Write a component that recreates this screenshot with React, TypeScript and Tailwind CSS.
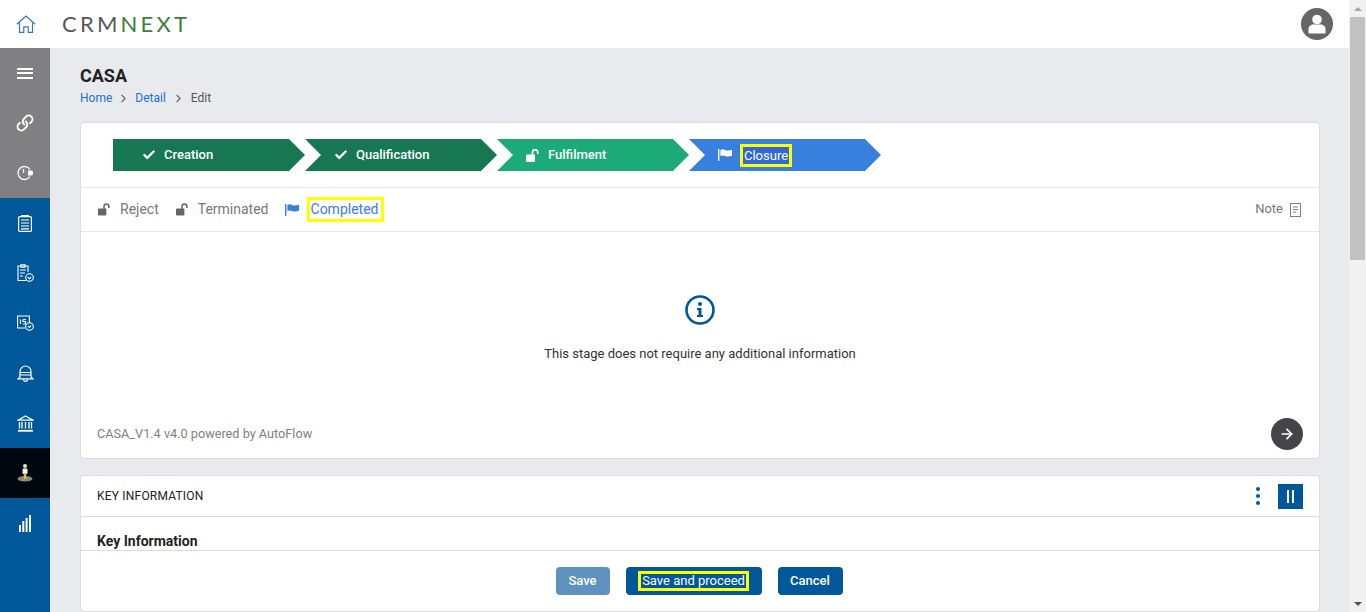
import { ArrowRight, Check, ChevronRight, Link } from "lucide-react"

const NAVY = "bg-[#00589b]"

type StageProps = {
  label: string
  color: string
  first?: boolean
  icon: React.ReactNode
  marked?: boolean
}

const LockOpen = ({ className }: { className?: string }) => (
  <svg viewBox="0 0 14 13" className={className} fill="currentColor">
    <rect x="0" y="5.5" width="9" height="7.5" rx="0.8" />
    <path d="M6.5 6V3.2A2.6 2.6 0 0 1 11.7 3.2V5" fill="none" stroke="currentColor" strokeWidth="1.7" />
  </svg>
)

const Flag = ({ className }: { className?: string }) => (
  <svg viewBox="0 0 14 12" className={className} fill="currentColor">
    <rect x="0" y="0" width="1.4" height="12" />
    <path d="M2.4 1C4.2 0 5.4 0.2 7 1C9 1.8 11 1.6 14 0.8V6.8C11 7.8 9 7.8 7 7C5.2 6.2 4 6.2 2.4 7Z" />
  </svg>
)

const Stage = ({ label, color, first, icon, marked }: StageProps) => (
  <div
    className={`flex h-8 w-48 items-center text-[13px] font-medium text-white ${color} ${
      first
        ? "pl-[29px] [clip-path:polygon(0_0,176px_0,192px_50%,176px_100%,0_100%)]"
        : "pl-[29px] [clip-path:polygon(0_0,176px_0,192px_50%,176px_100%,0_100%,16px_50%)]"
    }`}
  >
    <span className="flex w-[22px] shrink-0 items-center">{icon}</span>
    <span className={marked ? "border-[3px] border-[#ffff00] bg-[#3367d6] px-[1px] font-normal leading-[17px]" : ""}>
      {label}
    </span>
  </div>
)

const SideItem = ({ children, active }: { children: React.ReactNode; active?: boolean }) => (
  <div className={`flex h-[50px] items-center justify-center ${active ? "bg-[#00080f]" : ""}`}>{children}</div>
)

const Sidebar = () => (
  <aside className="flex w-[50px] shrink-0 flex-col text-white">
    <div className="bg-[#808083]">
      <SideItem>
        <span className="flex w-4 flex-col gap-[2.5px]">
          <span className="h-[2px] bg-white" />
          <span className="h-[2px] bg-white" />
          <span className="h-[2px] bg-white" />
        </span>
      </SideItem>
      <SideItem>
        <Link size={18} strokeWidth={2.6} className="-scale-x-100 rotate-90" />
      </SideItem>
      <SideItem>
        <svg viewBox="0 0 18 16" className="h-4 w-[18px]" fill="none" stroke="currentColor" strokeWidth="1.3">
          <path d="M14 4.5A6.5 6.5 0 1 0 14 11.500" />
          <path d="M7.500 4v4" />
          <path d="M12 5.500h3.500l1.500 1v3l-1.500 1H12z" fill="currentColor" stroke="none" />
        </svg>
      </SideItem>
    </div>
    <div className={`flex-1 ${NAVY}`}>
      <SideItem>
        <svg viewBox="0 0 14 17" className="h-[17px] w-[14px]" fill="none" stroke="currentColor" strokeWidth="1.2">
          <rect x="0.6" y="1.600" width="12.800" height="14.800" rx="1" />
          <path d="M3 0.600h8M3 5h8M3 8h8M3 11h8M3 13.800h8" />
        </svg>
      </SideItem>
      <SideItem>
        <svg viewBox="0 0 17 18" className="h-[18px] w-[17px]" fill="none" stroke="currentColor" strokeWidth="1.1">
          <path d="M9 16.500H1V2h10v6" />
          <path d="M4 0.800h4v2.400H4zM3 6h6M3 9h5M3 12h3" />
          <circle cx="12.500" cy="13.500" r="3.800" />
          <path d="M10.800 13l1.700 1.800 1.700-1.800" />
        </svg>
      </SideItem>
      <SideItem>
        <svg viewBox="0 0 17 16" className="h-4 w-[17px]" fill="none" stroke="currentColor" strokeWidth="1.1">
          <path d="M8 13H0.600V1h11.800v7" />
          <path d="M3.500 4.500V9M6 4.500h3M6 4.500v2h2.500V9H6" />
          <circle cx="12.500" cy="11.500" r="3.800" />
          <path d="M11 11l1.500 1.500 1.500-2" />
        </svg>
      </SideItem>
      <SideItem>
        <svg viewBox="0 0 17 17" className="h-[17px] w-[17px]" fill="none" stroke="currentColor" strokeWidth="1.200">
          <path d="M3 12V6.500a5.500 5.500 0 0 1 11 0V12l2 1.800H1z" />
          <path d="M3 7.500h11M3 10h11" />
          <path d="M6.500 14.500a2 1.800 0 0 0 4 0" />
        </svg>
      </SideItem>
      <SideItem>
        <svg viewBox="0 0 17 17" className="h-[17px] w-[17px]" fill="none" stroke="currentColor" strokeWidth="1.300">
          <path d="M8.500 1L16 5.200H1z" />
          <path d="M2.500 7v6.500M5 7v6.500M8.500 7v6.500M12 7v6.500M14.500 7v6.500" />
          <path d="M1 15.800h15" strokeWidth="1.800" />
        </svg>
      </SideItem>
      <SideItem active>
        <svg viewBox="0 0 16 18" className="h-[18px] w-4">
          <ellipse cx="8" cy="14.800" rx="7.500" ry="2.800" fill="#8a8a85" />
          <circle cx="8" cy="2" r="2" fill="#f2e2b8" />
          <rect x="5.500" y="4.500" width="5" height="5.500" rx="1.200" fill="#ffffff" />
          <rect x="6.800" y="9" width="2.400" height="6" fill="#f5b731" />
        </svg>
      </SideItem>
      <SideItem>
        <svg viewBox="0 0 12 17" className="h-[17px] w-3" fill="currentColor">
          <rect x="0" y="10" width="2" height="7" />
          <rect x="3.300" y="6" width="2" height="11" />
          <rect x="6.600" y="3" width="2" height="14" />
          <rect x="10" y="0" width="2" height="17" />
        </svg>
      </SideItem>
    </div>
  </aside>
)

const Header = () => (
  <header className="flex h-12 shrink-0 items-center bg-white pl-4 pr-4">
    <svg viewBox="0 0 20 18" className="h-[18px] w-5" fill="none" stroke="#3a74b0" strokeWidth="1.2">
      <path d="M0.800 9.200L10 1l9.200 8.200" />
      <path d="M3.500 7.500v9.800h4.300v-5.500h4.400v5.500h4.300V7.500" />
    </svg>
    <div className="ml-[26px] font-['Lato',sans-serif] text-[22px] font-normal leading-none tracking-[3.2px] text-[#58585a]">
      CRM<span className="text-[#3c8039]">NEXT</span>
    </div>
    <svg viewBox="0 0 32 32" className="ml-auto h-8 w-8">
      <circle cx="16" cy="16" r="16" fill="#666666" />
      <circle cx="16" cy="11.500" r="4.800" fill="#ffffff" />
      <path d="M7.500 25.500V21c0-3 2.500-4.500 5-4.500h7c2.500 0 5 1.500 5 4.500v4.500z" fill="#ffffff" />
    </svg>
  </header>
)

const App = () => (
  <div className="flex h-[612px] w-[1366px] overflow-hidden bg-[#e9eaee] font-['Roboto',sans-serif] text-[13px] text-[#333333]">
    <div className="flex min-w-0 flex-1 flex-col">
      <Header />
      <div className="flex min-h-0 flex-1">
        <Sidebar />
        <main className="min-w-0 flex-1 pl-[30px] pr-[29px] pt-[17px]">
          <h1 className="text-lg font-bold leading-[22px] text-[#222222]">CASA</h1>
          <nav className="mt-[3px] flex h-[16px] items-center text-xs text-[#1a73c9]">
            <span>Home</span>
            <ChevronRight size={13} className="mx-[5px] text-[#666666]" />
            <span>Detail</span>
            <ChevronRight size={13} className="mx-[6px] text-[#666666]" />
            <span className="text-[#555555]">Edit</span>
          </nav>

          <section className="mt-4 h-[337px] rounded border border-[#dddddd] bg-white">
            <div className="flex h-[65px] items-center border-b border-[#e6e6e6] pl-8">
              <Stage first label="Creation" color="bg-[#167752]" icon={<Check size={14} strokeWidth={4} />} />
              <Stage label="Qualification" color="bg-[#167752]" icon={<Check size={14} strokeWidth={4} />} />
              <Stage label="Fulfilment" color="bg-[#1cab78]" icon={<LockOpen className="h-[13px] w-[14px]" />} />
              <Stage marked label="Closure" color="bg-[#3780de]" icon={<Flag className="h-3 w-[14px]" />} />
            </div>

            <div className="flex h-[44px] items-center border-b border-[#e6e6e6] pl-[17px] pr-[18px] text-sm text-[#777777]">
              <LockOpen className="h-[13px] w-[13px] text-[#666666]" />
              <span className="-mt-[1px] ml-[9px]">Reject</span>
              <LockOpen className="ml-[17px] h-[13px] w-[13px] text-[#666666]" />
              <span className="-mt-[1px] ml-[9px]">Terminated</span>
              <Flag className="ml-[16px] h-3 w-[14px] text-[#3780de]" />
              <span className="ml-[8px] border-[3px] border-[#ffff00] pl-[1px] pr-[3px] leading-[19px] text-[#3780de]">Completed</span>
              <span className="ml-auto text-[13px]">Note</span>
              <svg viewBox="0 0 11 14" className="ml-[7px] h-[14px] w-[11px]" fill="none" stroke="#808080">
                <rect x="0.500" y="0.500" width="10" height="13" />
                <path d="M3 4h5M3 6.500h5M3 9h3" />
              </svg>
            </div>

            <div className="flex h-[191px] flex-col items-center pt-[63px]">
              <svg viewBox="0 0 30 30" className="h-[30px] w-[30px] text-[#00589b]">
                <circle cx="15" cy="15" r="13.500" fill="none" stroke="currentColor" strokeWidth="2.600" />
                <circle cx="15" cy="9" r="2" fill="currentColor" />
                <path d="M12 13h4.500v7H18v2h-6v-2h1.500v-5H12z" fill="currentColor" />
              </svg>
              <p className="mt-[19px] text-[#333333]">This stage does not require any additional information</p>
            </div>

            <div className="flex h-[35px] items-start justify-between pl-4 pr-4">
              <span className="mt-[1px] text-[12.7px] text-[#808080]">CASA_V1.4 v4.0 powered by AutoFlow</span>
              <span className="-mt-[5px] flex h-8 w-8 items-center justify-center rounded-full bg-[#454549] text-white">
                <ArrowRight size={16} strokeWidth={2.6} />
              </span>
            </div>
          </section>

          <section className="mt-4 rounded border border-[#dddddd] bg-white">
            <div className="flex h-[41px] items-center justify-between border-b border-[#dddddd] pl-4 pr-4">
              <span className="text-xs tracking-[0.2px] text-[#222222]">KEY INFORMATION</span>
              <div className="flex items-center gap-[18px]">
                <span className="flex flex-col gap-[3px]">
                  <span className={`h-[4px] w-[4px] rounded-full ${NAVY}`} />
                  <span className={`h-[4px] w-[4px] rounded-full ${NAVY}`} />
                  <span className={`h-[4px] w-[4px] rounded-full ${NAVY}`} />
                </span>
                <span className={`flex h-[25px] w-[25px] items-center justify-center gap-[3px] ${NAVY}`}>
                  <span className="h-[13px] w-[2px] bg-white" />
                  <span className="h-[13px] w-[2px] bg-white" />
                </span>
              </div>
            </div>
            <div className="h-[33px] overflow-hidden pl-4 pt-[16px] text-sm font-bold leading-[17px] text-[#222222]">Key Information</div>
            <div className="flex h-[61px] items-start justify-center gap-4 border-t border-[#dddddd] pr-[2px] pt-4 text-[13px] font-medium text-white">
              <button className="h-[28px] w-[54px] rounded bg-[#5f93bd]">Save</button>
              <button className={`flex h-[28px] w-[136px] items-center justify-center rounded ${NAVY}`}>
                <span className="border-[3px] border-[#ffff00] px-[1px] font-normal leading-[14px]">Save and proceed</span>
              </button>
              <button className={`h-[28px] w-[65px] rounded ${NAVY}`}>Cancel</button>
            </div>
          </section>
        </main>
      </div>
    </div>

    <div className="flex w-[17px] shrink-0 flex-col bg-[#f1f1f1]">
      <div className="flex h-[17px] items-center justify-center">
        <span className="h-0 w-0 border-x-[4px] border-b-[4px] border-x-transparent border-b-[#a3a3a3]" />
      </div>
      <div className="mx-auto h-[243px] w-[15px] bg-[#c1c1c1]" />
      <div className="mt-auto flex h-[17px] items-center justify-center">
        <span className="h-0 w-0 border-x-[4px] border-t-[4px] border-x-transparent border-t-[#505050]" />
      </div>
    </div>
  </div>
)

export default App
